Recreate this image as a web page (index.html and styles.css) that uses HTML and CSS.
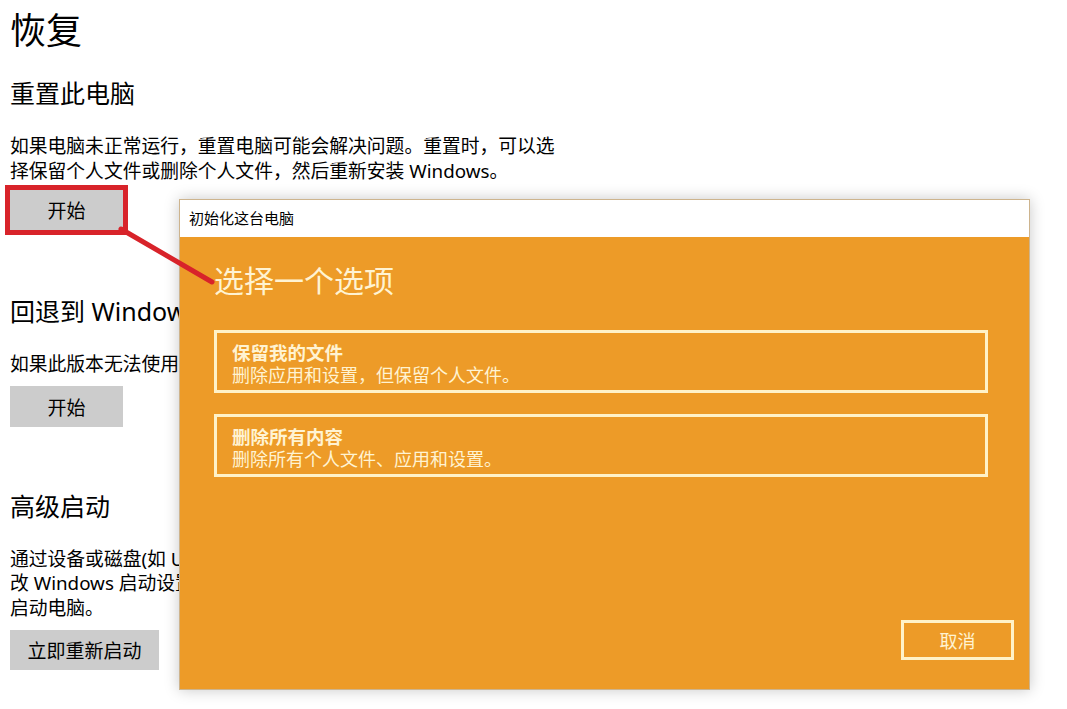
FILE: index.html
```html
<!DOCTYPE html>
<html lang="zh-CN">
<head>
<meta charset="utf-8">
<title>恢复</title>
<link rel="stylesheet" href="styles.css">
</head>
<body>
<main class="page">
  <h1 class="title">恢复</h1>

  <h2 class="section-title s1">重置此电脑</h2>
  <p class="desc d1">如果电脑未正常运行，重置电脑可能会解决问题。重置时，可以选<br>择保留个人文件或删除个人文件，然后重新安装 Windows。</p>
  <button class="btn btn-start highlight">开始</button>

  <div class="obscured">
    <h2 class="section-title s2">回退到 Windows 10 的上一个版本</h2>
    <p class="desc d2">如果此版本无法使用，请尝试回退到以前的版本。</p>
    <button class="btn btn-start b2">开始</button>

    <h2 class="section-title s3">高级启动</h2>
    <p class="desc d3">通过设备或磁盘(如 U 盘或 DVD)启动，更改电脑的固件设置，更<br>改 Windows 启动设置，或者从系统映像还原 Windows。这将重新<br>启动电脑。</p>
    <button class="btn btn-restart">立即重新启动</button>
  </div>
</main>

<section class="dialog">
  <div class="dialog-titlebar">初始化这台电脑</div>
  <div class="dialog-body">
    <div class="dialog-heading">选择一个选项</div>
    <div class="option">
      <div class="option-title">保留我的文件</div>
      <div class="option-sub">删除应用和设置，但保留个人文件。</div>
    </div>
    <div class="option">
      <div class="option-title">删除所有内容</div>
      <div class="option-sub">删除所有个人文件、应用和设置。</div>
    </div>
    <div class="dialog-footer">
      <button class="cancel">取消</button>
    </div>
  </div>
</section>

<svg class="pointer" width="1067" height="709" viewBox="0 0 1067 709">
  <line x1="121" y1="229" x2="212" y2="282" stroke="#d8232a" stroke-width="5" stroke-linecap="round"/>
</svg>
</body>
</html>
```

FILE: styles.css
```css
html, body {
  margin: 0;
  padding: 0;
  background: #ffffff;
}

body {
  font-family: "Noto Sans", "Noto Sans CJK SC", sans-serif;
  color: #000000;
  width: 1067px;
  height: 709px;
  overflow: hidden;
  position: relative;
}

.page {
  padding: 9px 0 0 10px;
}

.obscured {
  width: 169px;
  overflow: hidden;
}

.title {
  margin: 0;
  font-size: 36px;
  line-height: 44px;
  font-weight: 400;
}

.section-title {
  margin: 0;
  font-size: 25px;
  line-height: 32px;
  font-weight: 400;
  white-space: nowrap;
}

.s1 { margin-top: 24px; }
.s2 { margin-top: 65px; }
.s3 { margin-top: 63px; }

.desc {
  margin: 24.5px 0 0;
  font-size: 18.8px;
  line-height: 25px;
  white-space: nowrap;
}

.d3 {
  margin-top: 24.75px;
  line-height: 24.5px;
}

.btn {
  display: block;
  border: 0;
  padding: 0;
  background: #cccccc;
  color: #000000;
  font-family: inherit;
  font-size: 19px;
  height: 40px;
}

.btn-start {
  width: 113px;
  margin-top: 6.5px;
}

.b2 {
  margin-top: 9.5px;
  height: 41px;
}

.btn-restart {
  width: 149px;
  margin-top: 9.75px;
}

.highlight {
  outline: 5px solid #d8232a;
  outline-offset: 0;
}

.dialog {
  position: absolute;
  left: 179px;
  top: 199px;
  width: 851px;
  height: 491px;
  box-sizing: border-box;
  border: 1px solid #cdb48e;
  background: #ed9b28;
  box-shadow: 0 0 14px rgba(0, 0, 0, 0.22);
  display: flex;
  flex-direction: column;
}

.dialog-titlebar {
  height: 37px;
  line-height: 37px;
  background: #ffffff;
  padding-left: 9px;
  font-size: 15px;
  color: #000000;
}

.dialog-body {
  flex: 1;
  display: flex;
  flex-direction: column;
  padding: 0 15px 29px 34px;
  color: #fff3d2;
}

.dialog-heading {
  margin-top: 24px;
  margin-bottom: 29px;
  font-size: 30px;
  line-height: 40px;
}

.option {
  box-sizing: border-box;
  width: 774px;
  height: 63px;
  border: 3px solid #fff2c8;
  padding: 7.5px 15px 0;
}

.option + .option {
  margin-top: 21px;
}

.option-title {
  font-weight: 700;
  font-size: 18.5px;
  line-height: 23px;
}

.option-sub {
  font-size: 18px;
  line-height: 23px;
}

.dialog-footer {
  margin-top: auto;
  display: flex;
  justify-content: flex-end;
}

.cancel {
  box-sizing: border-box;
  width: 113px;
  height: 40px;
  border: 3px solid #fff2c8;
  background: transparent;
  color: #fff3d2;
  font-family: inherit;
  font-size: 18px;
  padding: 0;
}

.pointer {
  position: absolute;
  left: 0;
  top: 0;
  pointer-events: none;
}
```
